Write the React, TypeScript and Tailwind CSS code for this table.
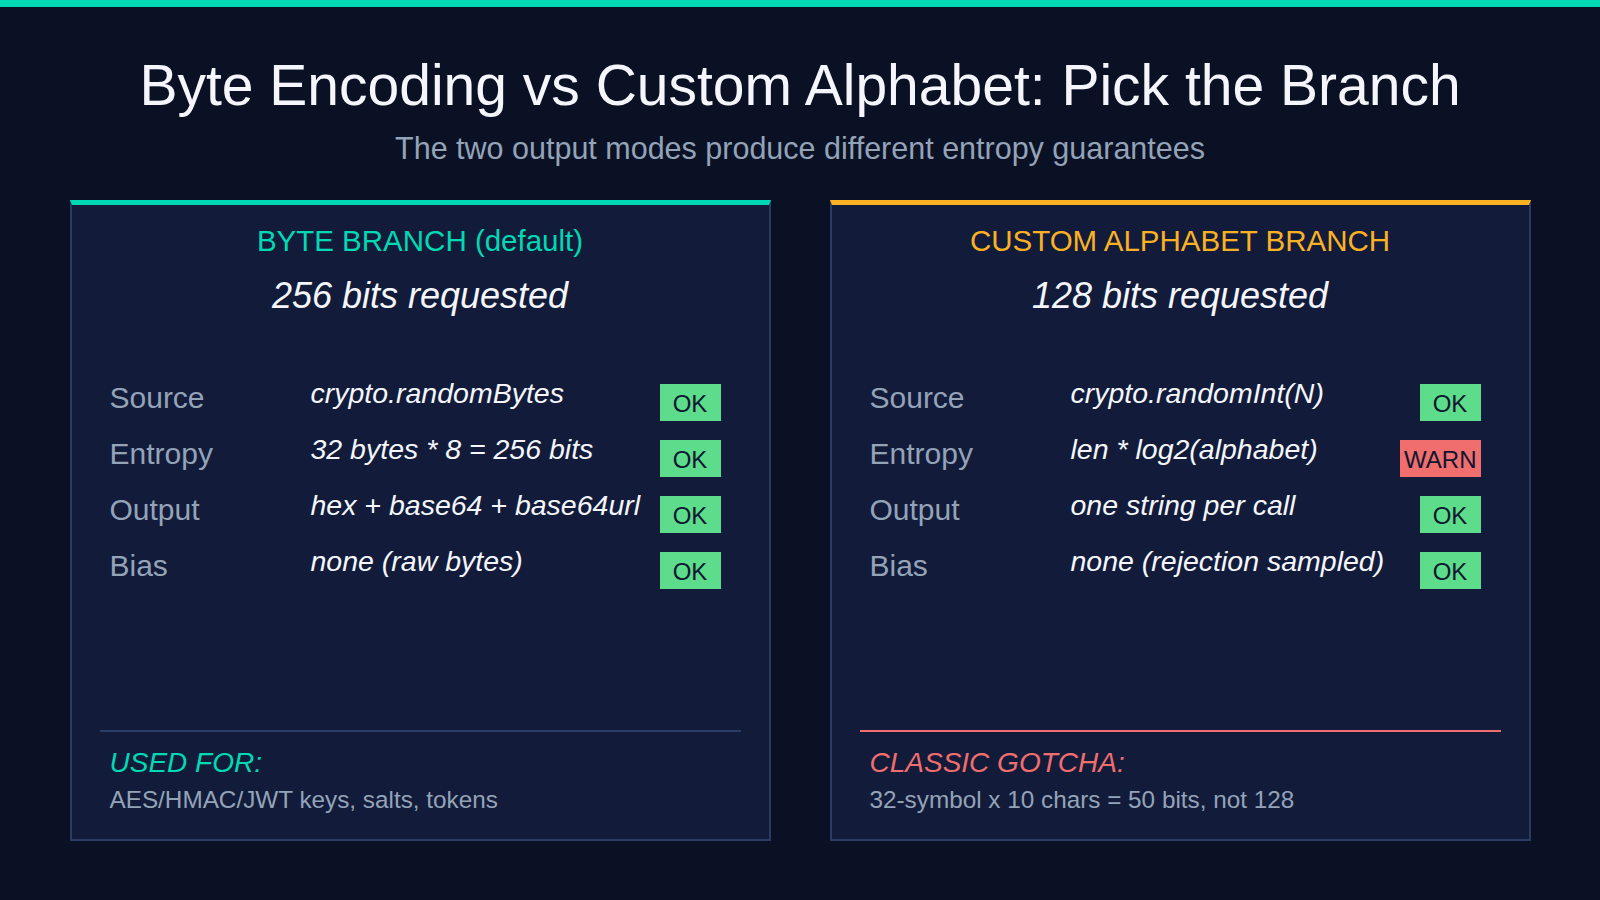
type Status = "ok" | "warn";

type Row = {
  label: string;
  value: string;
  status: Status;
};

type BranchPanelProps = {
  title: string;
  requested: string;
  rows: Row[];
  accent: "teal" | "amber";
  footerTitle: string;
  footerText: string;
  footerTone: "teal" | "red";
};

const byteRows: Row[] = [
  { label: "Source", value: "crypto.randomBytes", status: "ok" },
  { label: "Entropy", value: "32 bytes * 8 = 256 bits", status: "ok" },
  { label: "Output", value: "hex + base64 + base64url", status: "ok" },
  { label: "Bias", value: "none (raw bytes)", status: "ok" },
];

const alphabetRows: Row[] = [
  { label: "Source", value: "crypto.randomInt(N)", status: "ok" },
  { label: "Entropy", value: "len * log2(alphabet)", status: "warn" },
  { label: "Output", value: "one string per call", status: "ok" },
  { label: "Bias", value: "none (rejection sampled)", status: "ok" },
];

function StatusBadge({ status }: { status: Status }) {
  return (
    <span
      className={[
        "mt-[4px] inline-flex h-[37px] min-w-[61px] shrink-0 items-center justify-center px-[4px] pt-[2px] text-[24px] leading-none text-[#0d1730]",
        status === "ok" ? "bg-[#5ddc8b]" : "bg-[#f06e6e]",
      ].join(" ")}
    >
      {status === "ok" ? "OK" : "WARN"}
    </span>
  );
}

function BranchPanel({
  title,
  requested,
  rows,
  accent,
  footerTitle,
  footerText,
  footerTone,
}: BranchPanelProps) {
  return (
    <section
      className={[
        "flex h-[641px] w-[701px] flex-col border-2 border-t-[5px] border-[#2b3b62] bg-[#121c3a]",
        accent === "teal" ? "border-t-[#00d9b4]" : "border-t-[#fbb124]",
      ].join(" ")}
    >
      <h2
        className={[
          "mt-[19px] text-center text-[29.5px] leading-[34px]",
          accent === "teal" ? "text-[#00d9b4]" : "text-[#fbb124]",
        ].join(" ")}
      >
        {title}
      </h2>
      <p className="mt-[18px] text-center text-[36px] italic leading-[40px] text-[#f4f6fb]">
        {requested}
      </p>

      <div className="mt-[64px] pl-[38px] pr-[48px]">
        {rows.map((row) => (
          <div key={row.label} className="flex h-[56px] items-start">
            <span className="mt-[3px] w-[201px] shrink-0 text-[30px] leading-[30px] text-[#94a3b8]">
              {row.label}
            </span>
            <span className="flex-1 whitespace-nowrap text-[28.5px] italic leading-[26px] text-[#f4f6fb]">
              {row.value}
            </span>
            <StatusBadge status={row.status} />
          </div>
        ))}
      </div>

      <div className="mt-auto pb-[25px]">
        <div
          className={[
            "mx-[28px] h-[2px]",
            footerTone === "teal" ? "bg-[#2b3d66]" : "bg-[#f06e6e]",
          ].join(" ")}
        />
        <p
          className={[
            "mt-[15px] pl-[38px] text-[28px] italic leading-[32px]",
            footerTone === "teal" ? "text-[#00d9b4]" : "text-[#f06e6e]",
          ].join(" ")}
        >
          {footerTitle}
        </p>
        <p className="mt-[7px] pl-[38px] text-[24.3px] leading-[28px] text-[#94a3b8]">
          {footerText}
        </p>
      </div>
    </section>
  );
}

export default function App() {
  return (
    <div className="h-[900px] w-[1600px] overflow-hidden bg-[#0a1124] font-['Liberation_Sans',Arial,sans-serif]">
      <div className="h-[7px] bg-[#00d9b4]" />
      <h1 className="mt-[46px] text-center text-[57px] leading-[64px] text-[#f4f6fb]">
        Byte Encoding vs Custom Alphabet: Pick the Branch
      </h1>
      <p className="mt-[13px] text-center text-[30.5px] leading-[36px] text-[#94a3b8]">
        The two output modes produce different entropy guarantees
      </p>

      <div className="mt-[34px] flex justify-center gap-[59px]">
        <BranchPanel
          title="BYTE BRANCH (default)"
          requested="256 bits requested"
          rows={byteRows}
          accent="teal"
          footerTitle="USED FOR:"
          footerText="AES/HMAC/JWT keys, salts, tokens"
          footerTone="teal"
        />
        <BranchPanel
          title="CUSTOM ALPHABET BRANCH"
          requested="128 bits requested"
          rows={alphabetRows}
          accent="amber"
          footerTitle="CLASSIC GOTCHA:"
          footerText="32-symbol x 10 chars = 50 bits, not 128"
          footerTone="red"
        />
      </div>
    </div>
  );
}
